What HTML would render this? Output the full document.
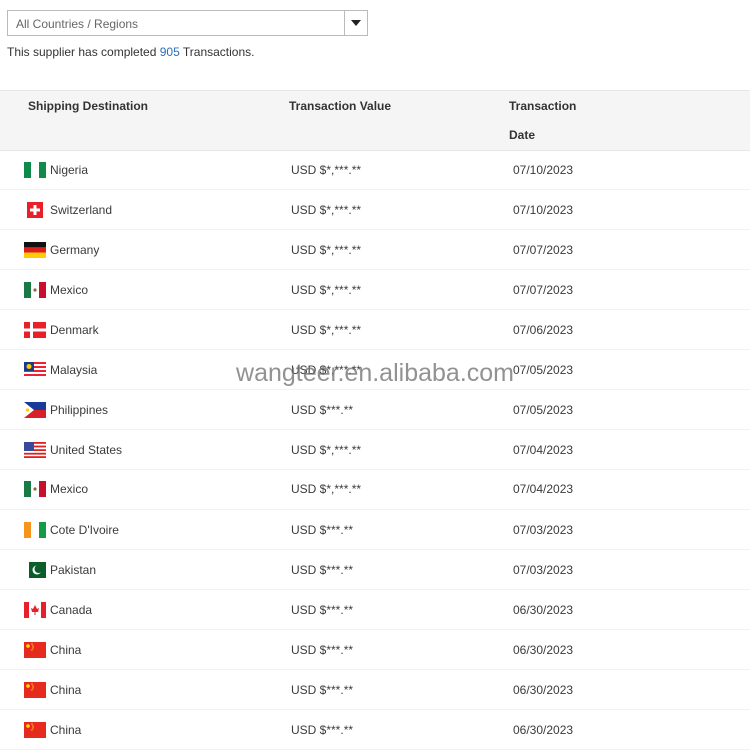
<!DOCTYPE html>
<html><head><meta charset="utf-8"><style>
*{margin:0;padding:0;box-sizing:border-box}
body{width:750px;height:750px;background:#fff;font-family:"Liberation Sans",Arial,sans-serif;color:#3a3a3a;position:relative;overflow:hidden;font-size:12px}
.sel{position:absolute;left:7px;top:10px;width:361px;height:26px;border:1px solid #bbb;background:#fff}
.sel span{position:absolute;left:8px;top:6px;color:#666;font-size:12px}
.sel .arr{position:absolute;right:0;top:0;width:23px;height:24px;border-left:1px solid #bbb}
.sel .arr:after{content:"";position:absolute;left:6px;top:9px;border-left:5px solid transparent;border-right:5px solid transparent;border-top:6px solid #222}
.info{position:absolute;left:7px;top:45px;font-size:12px;color:#333}
.info b{font-weight:normal;color:#2a6ebb}
.head{position:absolute;left:0;top:90px;width:750px;height:61px;background:#f5f5f5;border-top:1px solid #e6e6e6;border-bottom:1px solid #e6e6e6}
.head div{position:absolute;font-weight:bold;font-size:12px;color:#333}
.row{position:absolute;left:0;width:750px;height:40px;border-bottom:1px solid #f2f2f2}
.row .f{position:absolute;left:24px;top:12px;width:22px;height:16px}
.row .n{position:absolute;left:50px;top:13px}
.row .v{position:absolute;left:291px;top:13px}
.row .d{position:absolute;left:513px;top:13px}
.wm{position:absolute;left:0;width:750px;text-align:center;top:359px;font-size:25px;color:rgba(110,110,110,.75)}
</style></head><body>
<div class="sel"><span>All Countries / Regions</span><div class="arr"></div></div>
<div class="info">This supplier has completed <b>905</b> Transactions.</div>
<div class="head">
<div style="left:28px;top:8px">Shipping Destination</div>
<div style="left:289px;top:8px">Transaction Value</div>
<div style="left:509px;top:8px">Transaction</div>
<div style="left:509px;top:37px">Date</div>
</div>

<div class="row" style="top:150px"><svg class="f" viewBox="0 0 22 16"><rect x="0" width="7" height="16" fill="#0f8a4a"/><rect x="15" width="7" height="16" fill="#0f8a4a"/></svg><span class="n">Nigeria</span><span class="v">USD $*,***.**</span><span class="d">07/10/2023</span></div>
<div class="row" style="top:190px"><svg class="f" viewBox="0 0 22 16"><rect x="3" width="16" height="16" fill="#e8202a"/><rect x="9.5" y="3" width="3" height="10" fill="#fff"/><rect x="6" y="6.5" width="10" height="3" fill="#fff"/></svg><span class="n">Switzerland</span><span class="v">USD $*,***.**</span><span class="d">07/10/2023</span></div>
<div class="row" style="top:230px"><svg class="f" viewBox="0 0 22 16"><rect width="22" height="5.4" fill="#111"/><rect y="5.3" width="22" height="5.4" fill="#dd1c1c"/><rect y="10.6" width="22" height="5.4" fill="#fc0"/></svg><span class="n">Germany</span><span class="v">USD $*,***.**</span><span class="d">07/07/2023</span></div>
<div class="row" style="top:270px"><svg class="f" viewBox="0 0 22 16"><rect width="7" height="16" fill="#1a7a45"/><rect x="15" width="7" height="16" fill="#c8102e"/><circle cx="11" cy="8" r="1.6" fill="#8a6a3a"/></svg><span class="n">Mexico</span><span class="v">USD $*,***.**</span><span class="d">07/07/2023</span></div>
<div class="row" style="top:310px"><svg class="f" viewBox="0 0 22 16"><rect width="22" height="16" fill="#e8202a"/><rect x="6" width="3" height="16" fill="#fff"/><rect y="6.5" width="22" height="3" fill="#fff"/></svg><span class="n">Denmark</span><span class="v">USD $*,***.**</span><span class="d">07/06/2023</span></div>
<div class="row" style="top:350px"><svg class="f" viewBox="0 0 22 16"><rect width="22" height="16" fill="#fff"/><rect y="0" width="22" height="2" fill="#e23"/><rect y="4" width="22" height="2" fill="#e23"/><rect y="8" width="22" height="2" fill="#e23"/><rect y="12" width="22" height="2" fill="#e23"/><rect width="10" height="9" fill="#1a3a8a"/><circle cx="5" cy="4.5" r="2.5" fill="#fc0"/></svg><span class="n">Malaysia</span><span class="v">USD $*,***.**</span><span class="d">07/05/2023</span></div>
<div class="row" style="top:390px"><svg class="f" viewBox="0 0 22 16"><rect width="22" height="8" fill="#1a3a9a"/><rect y="8" width="22" height="8" fill="#d81f2a"/><polygon points="0,0 10,8 0,16" fill="#fff"/><circle cx="3.5" cy="8" r="1.6" fill="#fc0"/></svg><span class="n">Philippines</span><span class="v">USD $***.**</span><span class="d">07/05/2023</span></div>
<div class="row" style="top:430px"><svg class="f" viewBox="0 0 22 16"><rect width="22" height="16" fill="#fff"/><rect y="0" width="22" height="1.8" fill="#d22"/><rect y="3.6" width="22" height="1.8" fill="#d22"/><rect y="7.2" width="22" height="1.8" fill="#d22"/><rect y="10.8" width="22" height="1.8" fill="#d22"/><rect y="14.2" width="22" height="1.8" fill="#d22"/><rect width="10" height="9" fill="#3a4a9a"/></svg><span class="n">United States</span><span class="v">USD $*,***.**</span><span class="d">07/04/2023</span></div>
<div class="row" style="top:470px"><svg class="f" viewBox="0 0 22 16" style="top:11px"><rect width="7" height="16" fill="#1a7a45"/><rect x="15" width="7" height="16" fill="#c8102e"/><circle cx="11" cy="8" r="1.6" fill="#8a6a3a"/></svg><span class="n" style="top:12px">Mexico</span><span class="v" style="top:12px">USD $*,***.**</span><span class="d" style="top:12px">07/04/2023</span></div>
<div class="row" style="top:510px"><svg class="f" viewBox="0 0 22 16"><rect width="7" height="16" fill="#f7941d"/><rect x="15" width="7" height="16" fill="#159a48"/></svg><span class="n">Cote D'Ivoire</span><span class="v">USD $***.**</span><span class="d">07/03/2023</span></div>
<div class="row" style="top:550px"><svg class="f" viewBox="0 0 22 16"><rect x="5" width="17" height="16" fill="#0b5e2a"/><circle cx="13" cy="8" r="4.5" fill="#fff"/><circle cx="14.5" cy="7" r="4" fill="#0b5e2a"/></svg><span class="n">Pakistan</span><span class="v">USD $***.**</span><span class="d">07/03/2023</span></div>
<div class="row" style="top:590px"><svg class="f" viewBox="0 0 22 16"><rect width="22" height="16" fill="#fff"/><rect width="5" height="16" fill="#e8202a"/><rect x="17" width="5" height="16" fill="#e8202a"/><path d="M11 3 L13 7 L15 6 L14 10 L11.5 10 L11.5 13 L10.5 13 L10.5 10 L8 10 L7 6 L9 7 Z" fill="#e8202a"/></svg><span class="n">Canada</span><span class="v">USD $***.**</span><span class="d">06/30/2023</span></div>
<div class="row" style="top:630px"><svg class="f" viewBox="0 0 22 16"><rect width="22" height="16" fill="#e62b1e"/><circle cx="4" cy="4" r="1.8" fill="#fd0"/><circle cx="8" cy="2" r=".7" fill="#fd0"/><circle cx="9" cy="4" r=".7" fill="#fd0"/><circle cx="9" cy="6" r=".7" fill="#fd0"/><circle cx="8" cy="8" r=".7" fill="#fd0"/></svg><span class="n">China</span><span class="v">USD $***.**</span><span class="d">06/30/2023</span></div>
<div class="row" style="top:670px"><svg class="f" viewBox="0 0 22 16"><rect width="22" height="16" fill="#e62b1e"/><circle cx="4" cy="4" r="1.8" fill="#fd0"/><circle cx="8" cy="2" r=".7" fill="#fd0"/><circle cx="9" cy="4" r=".7" fill="#fd0"/><circle cx="9" cy="6" r=".7" fill="#fd0"/><circle cx="8" cy="8" r=".7" fill="#fd0"/></svg><span class="n">China</span><span class="v">USD $***.**</span><span class="d">06/30/2023</span></div>
<div class="row" style="top:710px"><svg class="f" viewBox="0 0 22 16"><rect width="22" height="16" fill="#e62b1e"/><circle cx="4" cy="4" r="1.8" fill="#fd0"/><circle cx="8" cy="2" r=".7" fill="#fd0"/><circle cx="9" cy="4" r=".7" fill="#fd0"/><circle cx="9" cy="6" r=".7" fill="#fd0"/><circle cx="8" cy="8" r=".7" fill="#fd0"/></svg><span class="n">China</span><span class="v">USD $***.**</span><span class="d">06/30/2023</span></div>

<div class="wm">wangteer.en.alibaba.com</div>
</body></html>
